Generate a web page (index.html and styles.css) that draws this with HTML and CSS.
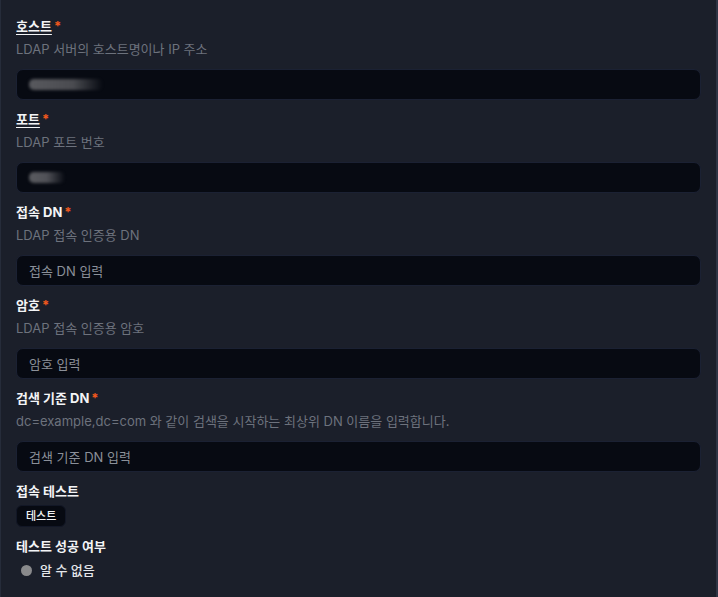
FILE: index.html
```html
<!DOCTYPE html>
<html lang="ko">
<head>
<meta charset="utf-8">
<link rel="stylesheet" href="styles.css">
</head>
<body>
<div class="page">
  <div class="field">
    <div class="label"><span class="u">호스트</span><span class="req">*</span></div>
    <div class="desc">LDAP 서버의 호스트명이나 IP 주소</div>
    <div class="input"><span class="blur blur-host"></span></div>
  </div>
  <div class="field">
    <div class="label"><span class="u">포트</span><span class="req">*</span></div>
    <div class="desc">LDAP 포트 번호</div>
    <div class="input"><span class="blur blur-port"></span></div>
  </div>
  <div class="field">
    <div class="label">접속 DN<span class="req">*</span></div>
    <div class="desc">LDAP 접속 인증용 DN</div>
    <div class="input"><span class="ph">접속 DN 입력</span></div>
  </div>
  <div class="field">
    <div class="label">암호<span class="req">*</span></div>
    <div class="desc">LDAP 접속 인증용 암호</div>
    <div class="input"><span class="ph">암호 입력</span></div>
  </div>
  <div class="field">
    <div class="label">검색 기준 DN<span class="req">*</span></div>
    <div class="desc">dc=example,dc=com 와 같이 검색을 시작하는 최상위 DN 이름을 입력합니다.</div>
    <div class="input"><span class="ph">검색 기준 DN 입력</span></div>
  </div>
  <div class="test">
    <div class="label">접속 테스트</div>
    <button class="btn">테스트</button>
  </div>
  <div class="result">
    <div class="label">테스트 성공 여부</div>
    <div class="status"><span class="dot"></span><span>알 수 없음</span></div>
  </div>
</div>
</body>
</html>
```
FILE: styles.css
```css
html, body {
  margin: 0;
  padding: 0;
  background: #1b1f2a;
}
body {
  font-family: "Inter", "Noto Sans CJK KR", sans-serif;
  height: 597px;
  overflow: hidden;
}
.page {
  box-sizing: border-box;
  width: 718px;
  height: 597px;
  border-left: 1px solid #262c3a;
  border-right: 2px solid #2e3444;
  padding: 16px 15px 0 15px;
  display: flex;
  flex-direction: column;
}
.field {
  display: flex;
  flex-direction: column;
  margin-bottom: 9px;
}
.label {
  font-size: 13px;
  line-height: 20px;
  font-weight: 700;
  color: #f3f4f6;
}
.u {
  text-decoration: underline;
  text-underline-offset: 3px;
  text-decoration-thickness: 1px;
}
.req {
  color: #f2581d;
  margin-left: 2px;
}
.desc {
  margin-top: 3px;
  font-size: 13px;
  line-height: 20px;
  color: #6d727d;
}
.input {
  margin-top: 10px;
  height: 31px;
  box-sizing: border-box;
  background: #070a12;
  border: 1px solid #1b2133;
  border-radius: 7px;
  display: flex;
  align-items: center;
  padding-left: 12px;
}
.ph {
  font-size: 13px;
  color: #8b9099;
}
.blur {
  display: block;
  height: 11px;
  border-radius: 5px;
  filter: blur(1.5px);
}
.blur-host {
  width: 74px;
  background: linear-gradient(90deg, #58595e 0%, #4a4b50 60%, rgba(60, 60, 66, 0) 100%);
}
.blur-port {
  width: 36px;
  background: linear-gradient(90deg, #5a5b60 0%, #505157 50%, rgba(60, 60, 66, 0) 100%);
}
.test {
  display: flex;
  flex-direction: column;
  align-items: flex-start;
}
.btn {
  margin-top: 4px;
  height: 22px;
  padding: 0 9px;
  background: #070a12;
  border: 1px solid #121726;
  border-radius: 6px;
  color: #f3f4f6;
  font-family: "Inter", "Noto Sans CJK KR", sans-serif;
  font-size: 11px;
  font-weight: 500;
  line-height: 20px;
}
.result {
  margin-top: 9px;
}
.status {
  margin-top: 4px;
  display: flex;
  align-items: center;
  gap: 8px;
  padding-left: 5px;
  font-size: 13px;
  line-height: 20px;
  color: #e5e7eb;
  font-weight: 500;
}
.dot {
  width: 11px;
  height: 11px;
  border-radius: 50%;
  background: #8a8a8c;
}
```
